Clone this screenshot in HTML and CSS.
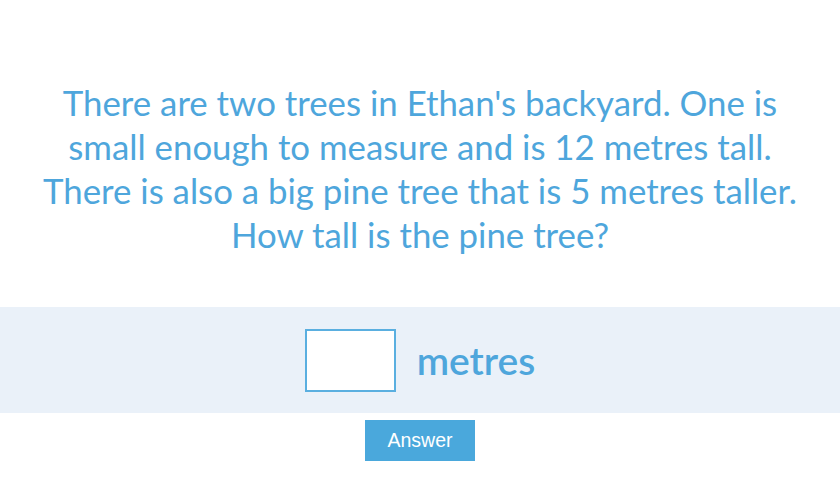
FILE: index.html
```html
<!DOCTYPE html>
<html>
<head>
<meta charset="utf-8">
<link rel="stylesheet" href="styles.css">
</head>
<body>
<main class="question">
  <p class="prompt">There are two trees in Ethan's backyard. One is small enough to measure and is 12 metres tall. There is also a big pine tree that is 5 metres taller. How tall is the pine tree?</p>
  <div class="answer-row">
    <input class="answer-box" type="text" aria-label="answer">
    <span class="unit">metres</span>
  </div>
  <div class="actions">
    <button class="answer-btn" type="button">Answer</button>
  </div>
</main>
</body>
</html>
```
FILE: styles.css
```css
html, body {
  margin: 0;
  padding: 0;
  background: #ffffff;
}

.question {
  width: 840px;
  height: 501px;
  display: flex;
  flex-direction: column;
}

.prompt {
  margin: 81px auto 0;
  width: 780px;
  text-align: center;
  font-family: Lato, "Noto Sans", sans-serif;
  font-size: 34.8px;
  line-height: 44px;
  color: #4ea6dc;
}

.answer-row {
  margin-top: 50px;
  height: 106px;
  background: #eaf1f9;
  display: flex;
  align-items: center;
  justify-content: center;
  gap: 21px;
}

.answer-box {
  box-sizing: border-box;
  width: 91px;
  height: 63px;
  margin: 0;
  border: 2px solid #5aafe0;
  background: #ffffff;
  outline: none;
}

.unit {
  font-family: Lato, "Noto Sans", sans-serif;
  font-size: 39px;
  font-weight: 600;
  color: #4ea6dc;
}

.actions {
  display: flex;
  justify-content: center;
  margin-top: 7px;
}

.answer-btn {
  width: 110px;
  height: 41px;
  border: none;
  background: #4aa8dc;
  color: #ffffff;
  font-family: "Liberation Sans", Arial, sans-serif;
  font-size: 19.5px;
}
```
